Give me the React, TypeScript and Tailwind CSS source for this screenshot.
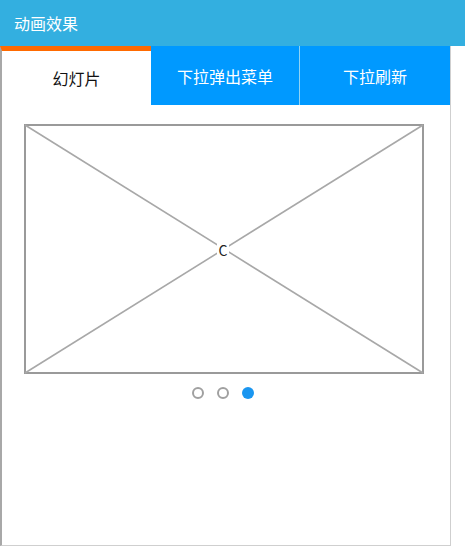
import React from "react";

export default function App() {
  const font = { fontFamily: '"Microsoft YaHei", "Noto Sans CJK SC", "Noto Sans", sans-serif' };
  return (
    <div className="w-[465px] h-[553px] bg-white relative overflow-hidden" style={font}>
      <div className="h-[46px] bg-[#33afe0] text-white text-[16px] pl-[14px] flex items-center">
        动画效果
      </div>
      <div className="w-[451px] h-[500px] border-l-2 border-l-[#a8a8a8] border-r border-r-[#cfcfcf] border-b border-b-[#cfcfcf] flex flex-col">
        <div className="flex h-[59px]">
          <div className="w-[149px] bg-white border-t-[5px] border-t-[#ff6a00] border-l-2 border-l-[#a8a8a8] -ml-[2px] box-content text-[16px] text-[#111] flex items-center justify-center">
            幻灯片
          </div>
          <div className="w-[149px] bg-[#0099ff] border-r border-r-[#8fd3f5] text-white text-[16px] flex items-center justify-center">
            下拉弹出菜单
          </div>
          <div className="flex-1 bg-[#0099ff] text-white text-[16px] flex items-center justify-center">
            下拉刷新
          </div>
        </div>
        <div className="pt-[19px] pl-[22px] flex flex-col">
          <div className="w-[400px] h-[250px] relative">
            <svg width="400" height="250" viewBox="0 0 400 250" className="absolute inset-0">
              <rect x="1" y="1" width="398" height="248" fill="white" stroke="#9a9a9a" strokeWidth="2" />
              <line x1="1" y1="1" x2="399" y2="249" stroke="#a8a8a8" strokeWidth="1.6" />
              <line x1="399" y1="1" x2="1" y2="249" stroke="#a8a8a8" strokeWidth="1.6" />
            </svg>
            <div className="absolute left-[193px] top-[116px] w-[12px] h-[20px] bg-white flex items-center justify-center text-[14px] text-[#222] leading-none">
              C
            </div>
          </div>
          <div className="w-[400px] flex justify-center gap-[13px] mt-[13px] pr-[3px]">
            <div className="w-[12px] h-[12px] rounded-full border-2 border-[#a0a0a0] bg-white" />
            <div className="w-[12px] h-[12px] rounded-full border-2 border-[#a0a0a0] bg-white" />
            <div className="w-[12px] h-[12px] rounded-full bg-[#1a96f0]" />
          </div>
        </div>
      </div>
    </div>
  );
}
